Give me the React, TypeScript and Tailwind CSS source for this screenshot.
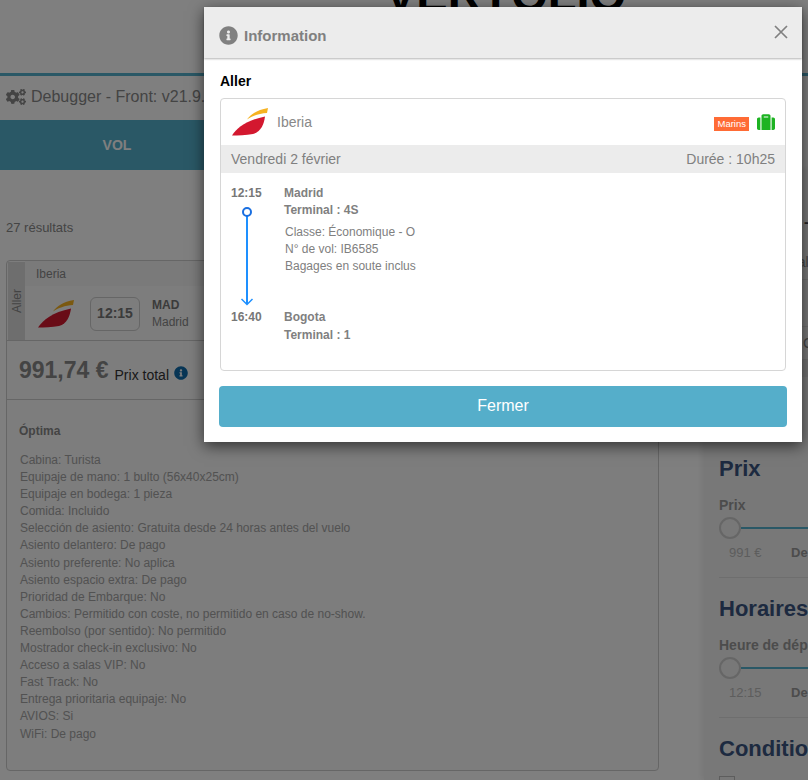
import React from "react";
import { FaCogs, FaInfoCircle, FaSuitcase } from "react-icons/fa";

const FARE_LINES = [
  "Cabina: Turista",
  "Equipaje de mano: 1 bulto (56x40x25cm)",
  "Equipaje en bodega: 1 pieza",
  "Comida: Incluido",
  "Selección de asiento: Gratuita desde 24 horas antes del vuelo",
  "Asiento delantero: De pago",
  "Asiento preferente: No aplica",
  "Asiento espacio extra: De pago",
  "Prioridad de Embarque: No",
  "Cambios: Permitido con coste, no permitido en caso de no-show.",
  "Reembolso (por sentido): No permitido",
  "Mostrador check-in exclusivo: No",
  "Acceso a salas VIP: No",
  "Fast Track: No",
  "Entrega prioritaria equipaje: No",
  "AVIOS: Si",
  "WiFi: De pago",
];

const IberiaLogo: React.FC = () => (
  <svg width="36" height="28" viewBox="0 0 36 28" className="shrink-0">
    <path d="M0 27.5C5 20 14 12.5 33 8.5C32 16 29 24 21 26C14 27.5 6 27.5 0 27.5Z" fill="#d3182f" />
    <path d="M15 11.5C19 6 25 2 36 0L35 5C27 5.5 20 8 15 11.5Z" fill="#f6b221" />
  </svg>
);

const FilterSlider: React.FC<{ label: string; low: string; high: string }> = ({ label, low, high }) => (
  <div className="h-[83px] border-b border-[#ddd]">
    <div className="h-[21px] text-[14px] leading-[21px] font-bold whitespace-nowrap text-[#999]">{label}</div>
    <div className="mt-[1px] flex h-[22px] items-center">
      <div className="h-[22px] w-[22px] shrink-0 rounded-full border-2 border-[#ccc] bg-[#f0f0f0]" />
      <div className="h-[2px] w-[200px] bg-[#55b0cc]" />
    </div>
    <div className="mt-[3px] flex h-[22px] w-[200px] items-center text-[13px] text-[#bbb]">
      <span className="w-[72px] pl-[10px]">{low}</span>
      <span className="font-bold text-[#999]">{high}</span>
    </div>
  </div>
);

const App: React.FC = () => {
  return (
    <div className="relative h-[780px] w-[808px] overflow-hidden bg-white font-['Liberation_Sans',Arial,sans-serif]">
      {/* page behind the dialog */}
      <div className="h-[73px] overflow-hidden pl-[385px]">
        <div className="mt-[-29px] text-[47px] leading-[47px] font-bold whitespace-nowrap text-black">VERYOLIO</div>
      </div>
      <div className="h-[3px] bg-[#55b0cc]" />
      <div className="flex h-[42px] items-center gap-[5px] pl-[6px] text-[16px] text-[#888]">
        <FaCogs size={20} />
        <span>Debugger - Front: v21.9.3</span>
      </div>
      <div className="mt-[2px] flex h-[50px] w-[500px] bg-[#55b0cc]">
        <div className="flex w-[234px] items-center justify-center text-[14px] font-bold text-white">VOL</div>
      </div>

      <div className="flex">
        <div className="w-[653px] shrink-0 pl-[6px]">
          <div className="flex h-[90px] w-[647px] items-end pb-[24px] text-[13px] leading-[16px] text-[#888]">27 résultats</div>
          <div className="h-[511px] w-[653px] rounded-[4px] border border-[#ccc] bg-[#fafafa]">
            <div className="flex h-[80px] border-b border-[#ccc] pl-[1px]">
              <div className="mt-[1px] flex h-[78px] w-[17px] items-center justify-center bg-[#ddd]">
                <span className="-rotate-90 text-[12px] text-[#888]">Aller</span>
              </div>
              <div className="flex-1">
                <div className="flex h-[25px] items-center bg-[#f5f5f5] pl-[11px] text-[12px] text-[#888]">Iberia</div>
                <div className="flex h-[55px] items-center pl-[13px]">
                  <IberiaLogo />
                  <div className="ml-[16px] flex h-[34px] w-[50px] items-center justify-center rounded-[6px] border border-[#ccc] text-[14px] font-bold text-[#777]">12:15</div>
                  <div className="ml-[12px] text-[12px] leading-[17px] text-[#888]">
                    <div className="font-bold text-[#777]">MAD</div>
                    <div>Madrid</div>
                  </div>
                </div>
              </div>
            </div>
            <div className="flex h-[59px] items-center border-b border-[#ccc] pl-[12px]">
              <span className="text-[23px] font-bold text-[#888]">991,74 €</span>
              <span className="mt-[11px] ml-[6px] text-[14px] text-[#333]">Prix total</span>
              <FaInfoCircle size={14} className="mt-[6px] ml-[5px] text-[#0f6bab]" />
            </div>
            <div className="pt-[22px] pl-[12px] text-[12px] font-bold text-[#888]">Óptima</div>
            <div className="mt-[12px] pl-[13px] text-[12px] leading-[17.1px] text-[#a4a4a4]">
              {FARE_LINES.map((line) => (
                <div key={line}>{line}</div>
              ))}
            </div>
          </div>
        </div>

        <div className="ml-[51px] h-[610px] w-[160px] shrink-0 bg-[#f0f0f0] pl-[15px] shadow-[-2px_0_6px_rgba(0,0,0,0.08)]">
          <div className="h-[110px] border-b border-[#ddd] pt-[44px] text-[14px] leading-[16px] text-[#888]">
            <div className="pl-[85px] font-bold text-[#444]">-</div>
            <div className="mt-[24px] pl-[60px] whitespace-nowrap">Total</div>
          </div>
          <div className="h-[47px] border-b border-[#ddd]" />
          <div className="flex h-[33px] items-center border-b border-[#ddd] pl-[84px] text-[14px] text-[#888]">Classe</div>
          <div className="h-[17px] bg-[#e4e4e4]" />
          <div className="h-[63px]" />
          <div className="flex h-[43px] items-end text-[22px] leading-[28px] font-bold text-[#3a5580]">Prix</div>
          <div className="mt-[12px]">
            <FilterSlider label="Prix" low="991 €" high="De" />
          </div>
          <div className="flex h-[45px] items-end text-[22px] leading-[28px] font-bold whitespace-nowrap text-[#3a5580]">Horaires</div>
          <div className="mt-[12px]">
            <FilterSlider label="Heure de départ" low="12:15" high="De" />
          </div>
          <div className="flex h-[45px] items-end text-[22px] leading-[28px] font-bold whitespace-nowrap text-[#3a5580]">Conditions</div>
          <div className="mt-[13px] h-[16px] w-[16px] border border-[#bbb]" />
        </div>
      </div>

      <div className="absolute inset-0 bg-black/50" />

      {/* dialog */}
      <div className="absolute top-[7px] left-[204px] h-[435px] w-[598px] bg-white shadow-[0_4px_14px_rgba(0,0,0,0.6)]">
        <div className="flex h-[51px] items-center bg-[#ececec] pr-[13px] pl-[15px] shadow-[0_1px_2px_rgba(0,0,0,0.3)]">
          <FaInfoCircle size={19} className="mt-[6px] text-[#808080]" />
          <span className="mt-[8px] ml-[6px] flex-1 text-[15px] font-bold text-[#808080]">Information</span>
          <svg width="16" height="16" viewBox="0 0 16 16" className="mt-[-2px]">
            <path d="M2 2L14 14M14 2L2 14" stroke="#808080" strokeWidth="1.7" fill="none" />
          </svg>
        </div>

        <div className="px-[16px]">
          <div className="pt-[15px] text-[14px] leading-[16px] font-bold text-black">Aller</div>
          <div className="mt-[9px] h-[273px] rounded-[4px] border border-[#d6d6d6]">
            <div className="flex h-[46px] items-center pr-[10px] pl-[11px]">
              <IberiaLogo />
              <span className="ml-[9px] flex-1 text-[14px] text-[#888]">Iberia</span>
              <span className="mt-[4px] bg-[#ff6b35] px-[3px] text-[9.5px] leading-[14px] text-white">Marins</span>
              <FaSuitcase size={18} className="ml-[8px] text-[#1db322]" />
            </div>
            <div className="flex h-[28px] items-center justify-between bg-[#ececec] pr-[10px] pl-[10px] text-[14px] text-[#808080]">
              <span>Vendredi 2 février</span>
              <span>Durée : 10h25</span>
            </div>
            <div className="flex pt-[12px] pl-[10px]">
              <div className="w-[53px] shrink-0">
                <div className="h-[17px] text-[12px] leading-[17px] font-bold text-[#777]">12:15</div>
                <svg width="32" height="104" viewBox="0 0 32 104" className="block">
                  <path d="M16 10V102" stroke="#1e90ff" strokeWidth="2" fill="none" />
                  <path d="M10.5 97L16 102.5L21.5 97" stroke="#1e90ff" strokeWidth="1.5" fill="none" />
                  <circle cx="16" cy="10" r="4" fill="#fff" stroke="#1a6fe0" strokeWidth="2" />
                </svg>
                <div className="mt-[3px] h-[17px] text-[12px] leading-[17px] font-bold text-[#777]">16:40</div>
              </div>
              <div className="text-[12px] leading-[17px] text-[#808080]">
                <div className="font-bold">Madrid</div>
                <div className="font-bold">Terminal : 4S</div>
                <div className="mt-[5px] ml-[1px]">Classe: Économique - O</div>
                <div className="ml-[1px]">N° de vol: IB6585</div>
                <div className="ml-[1px]">Bagages en soute inclus</div>
                <div className="mt-[34px] font-bold">Bogota</div>
                <div className="mt-[1px] font-bold">Terminal : 1</div>
              </div>
            </div>
          </div>
        </div>

        <div className="px-[15px] pt-[15px]">
          <button className="h-[41px] w-full rounded-[4px] bg-[#55aeca] pb-[2px] text-[16px] text-white">Fermer</button>
        </div>
      </div>
    </div>
  );
};

export default App;
